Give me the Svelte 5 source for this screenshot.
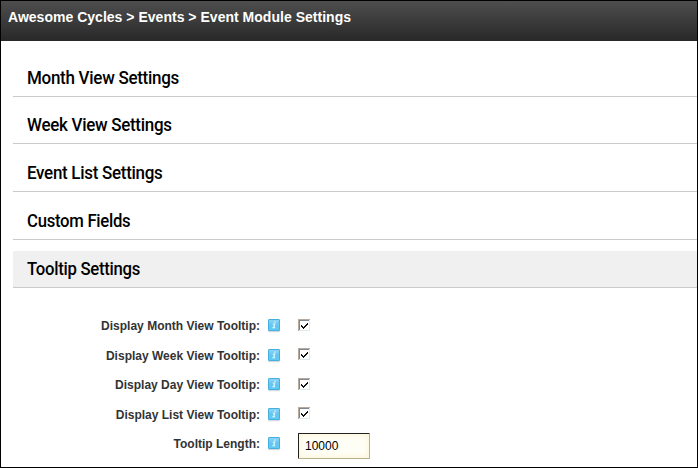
<script>
  const sections = [
    { title: 'Month View Settings', scale: 0.944, gap: 10 },
    { title: 'Week View Settings', scale: 0.942, gap: 11 },
    { title: 'Event List Settings', scale: 0.942, gap: 11 },
    { title: 'Custom Fields', scale: 0.928, gap: 11 },
    { title: 'Tooltip Settings', scale: 0.928, gap: 0, open: true }
  ];
  const fields = [
    { label: 'Display Month View Tooltip:', height: 30, checkTop: 1 },
    { label: 'Display Week View Tooltip:', height: 29, checkTop: 0 },
    { label: 'Display Day View Tooltip:', height: 30, checkTop: 1 },
    { label: 'Display List View Tooltip:', height: 29, checkTop: 0 },
    { label: 'Tooltip Length:', height: 30, value: '10000' }
  ];
</script>

<div class="page">
  <header>Awesome Cycles &gt; Events &gt; Event Module Settings</header>
  <main>
    {#each sections as s}
      <h2 class:open={s.open} style="margin-bottom:{s.gap}px"><span style="transform:scaleX({s.scale})">{s.title}</span></h2>
    {/each}
    <div class="fields">
      {#each fields as f}
        <div class="row" style="height:{f.height}px">
          <span class="label">{f.label}</span>
          <svg class="info" width="14" height="15" viewBox="0 0 14 15">
            <defs>
              <linearGradient id="blue" x1="0" y1="0" x2="0" y2="1">
                <stop offset="0" stop-color="#8fd6f5" />
                <stop offset=".5" stop-color="#66c5f0" />
                <stop offset="1" stop-color="#5cccf6" />
              </linearGradient>
            </defs>
            <rect x="1" y="12" width="12" height="2.2" rx="1" fill="#d6dade" />
            <rect x="1.5" y="1.5" width="11" height="11" rx=".5" fill="url(#blue)" stroke="#45b0e0" />
            <path d="M7.5 3.5h1.4l-.3 1.3H7.2zM5.8 5.6h2.6l-.9 3.7h.8l-.2.9H5.2l.2-.9h.7l.7-2.8h-1.2z" fill="#dff4fd" />
          </svg>
          {#if f.value}
            <input type="text" value={f.value} />
          {:else}
            <svg class="check" style="margin-top:{f.checkTop}px" width="13" height="13" viewBox="0 0 13 13" shape-rendering="crispEdges">
              <path d="M0 0h13v13H0z" fill="#fff" />
              <path d="M0 0h12v1H1v11H0z" fill="#b5aaa0" />
              <path d="M1 1h10v1H2v9H1z" fill="#7d8791" />
              <path d="M12 1v11H1v-1h10V1z" fill="#dcebf2" />
              <path d="M3 5h1v1h1v1h1V6h1V5h1V4h1V3h1v2H9v1H8v1H7v1H6v1H5V8H4V7H3z" fill="#111" transform="translate(0 1)" />
            </svg>
          {/if}
        </div>
      {/each}
    </div>
  </main>
</div>

<style>
  :global(body) { margin: 0; background: #fff; }
  .page {
    box-sizing: border-box;
    width: 698px;
    height: 468px;
    border: 1px solid #000;
    background: #fff;
    overflow: hidden;
    font-family: "Liberation Sans", Arial, sans-serif;
  }
  header {
    box-sizing: border-box;
    height: 40px;
    padding: 8px 0 0 7px;
    background: linear-gradient(#4e4e4e, #282828);
    color: #fff;
    font-size: 14px;
    line-height: 16px;
    font-weight: bold;
    letter-spacing: 0.02px;
    white-space: nowrap;
  }
  main { padding: 19px 0 0 12px; }
  h2 {
    box-sizing: border-box;
    height: 37px;
    margin: 0;
    padding-left: 14px;
    border-bottom: 1px solid #c9cbcb;
    color: #000;
    font: 500 18px/36px Roboto, "Open Sans", sans-serif;
    letter-spacing: -0.3px;
    white-space: nowrap;
  }
  h2 span { display: inline-block; transform-origin: left; }
  h2.open { background: #f0f0f0; }
  .fields { padding-top: 30px; }
  .row { display: flex; align-items: flex-start; }
  .label {
    width: 247px;
    padding: 1px 1px 0 0;
    text-align: right;
    color: #333;
    font-size: 12px;
    font-weight: bold;
    line-height: 14px;
  }
  .info { margin-left: 6px; flex: none; }
  .check { margin-left: 17px; flex: none; }
  input {
    box-sizing: border-box;
    width: 72px;
    height: 26px;
    margin: -3px 0 0 17px;
    padding: 0 6px;
    border: 1px solid;
    border-color: #222 #b9b18c #b9b18c #222;
    border-radius: 1px;
    background: #fffef6;
    box-shadow: inset 0 0 6px #fbf1cc;
    color: #000;
    font: 12px "Liberation Sans", Arial, sans-serif;
  }
</style>
